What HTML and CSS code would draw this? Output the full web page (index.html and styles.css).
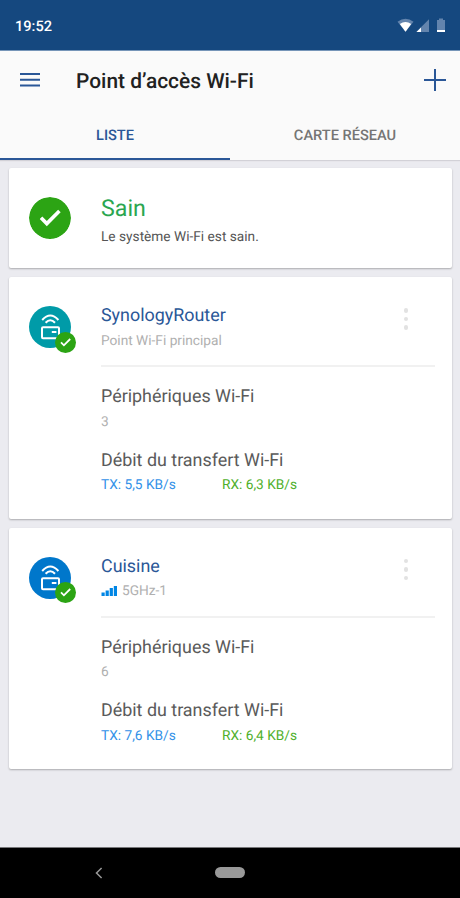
FILE: index.html
```html
<!DOCTYPE html>
<html lang="fr">
<head>
<meta charset="utf-8">
<title>Point d’accès Wi-Fi</title>
<link rel="stylesheet" href="styles.css">
</head>
<body>
<svg width="0" height="0" class="defs">
  <symbol id="router" viewBox="0 0 42 42">
    <g fill="none" stroke="#fff" stroke-width="2">
      <path d="M13.200 14Q21.300 5.200 29.400 14M16.600 16.700Q21.300 11.700 26 16.700"/>
      <rect x="13" y="21.200" width="17" height="11" rx="1"/>
      <path d="M22.800 26h4.600"/>
    </g>
  </symbol>
  <symbol id="check" viewBox="0 0 42 42">
    <circle cx="21" cy="21" r="21" fill="#2ca414"/>
    <path d="M12 20.800l5.800 5.800L30.400 14" fill="none" stroke="#fff" stroke-width="3.6"/>
  </symbol>
</svg>
<div class="status-bar">
  <span>19:52</span>
  <svg width="50" height="16" viewBox="0 0 50 16">
    <path d="M.5 3.8Q8.5-2.3 16.5 3.8L8.5 13.8Z" fill="#6384ad"/>
    <path d="M2.8 6Q8.5 2.2 14.2 6L8.5 13.8Z" fill="#fff"/>
    <path d="M19.5 14V13.8L32 1.2V14Z" fill="#6384ad"/>
    <path d="M19.5 14L24 9.5V14Z" fill="#fff"/>
    <path d="M40 2h2V.5h4V2h2v12h-8Z" fill="#6384ad"/>
    <path d="M40 12h8v2h-8Z" fill="#fff"/>
  </svg>
</div>
<header class="header">
  <div class="toolbar">
    <svg class="menu" width="20" height="14" viewBox="0 0 20 14"><path d="M0 1h20M0 6.700h20M0 12.400h20" stroke="#2a5797" stroke-width="2"/></svg>
    <h1>Point d’accès Wi-Fi</h1>
    <svg width="22" height="22" viewBox="0 0 22 22"><path d="M0 11h22M11 0v22" stroke="#2a5797" stroke-width="2"/></svg>
  </div>
  <nav class="tabs">
    <span class="tab active">LISTE</span>
    <span class="tab">CARTE RÉSEAU</span>
  </nav>
</header>
<main>
  <section class="card summary">
    <svg class="avatar"><use href="#check"/></svg>
    <div class="info">
      <h2>Sain</h2>
      <p>Le système Wi-Fi est sain.</p>
    </div>
  </section>
  <section class="card node">
    <div class="avatar teal"><svg><use href="#router"/></svg><svg class="badge"><use href="#check"/></svg></div>
    <div class="info">
      <div class="head">
        <div>
          <h3>SynologyRouter</h3>
          <p class="sub">Point Wi-Fi principal</p>
        </div>
        <div class="more"><i></i><i></i><i></i></div>
      </div>
      <h4>Périphériques Wi-Fi</h4>
      <p class="sub count">3</p>
      <h4>Débit du transfert Wi-Fi</h4>
      <p class="rates"><span class="tx">TX: 5,5 KB/s</span><span class="rx">RX: 6,3 KB/s</span></p>
    </div>
  </section>
  <section class="card node">
    <div class="avatar blue"><svg><use href="#router"/></svg><svg class="badge"><use href="#check"/></svg></div>
    <div class="info">
      <div class="head">
        <div>
          <h3>Cuisine</h3>
          <p class="sub"><svg class="signal" width="16" height="12" viewBox="0 0 16 12"><path d="M.5 7.500h3.200V11H.5ZM4.600 5.500h3.200V11H4.600ZM8.700 3h3.200v8H8.700ZM12.800 1H16v10h-3.200Z" fill="#0086e5"/></svg>5GHz-1</p>
        </div>
        <div class="more"><i></i><i></i><i></i></div>
      </div>
      <h4>Périphériques Wi-Fi</h4>
      <p class="sub count">6</p>
      <h4>Débit du transfert Wi-Fi</h4>
      <p class="rates"><span class="tx">TX: 7,6 KB/s</span><span class="rx">RX: 6,4 KB/s</span></p>
    </div>
  </section>
</main>
<footer class="system-nav">
  <svg width="8" height="12" viewBox="0 0 8 12"><path d="M6.600 1L1.500 6l5.100 5" fill="none" stroke="#999" stroke-width="1.500"/></svg>
  <span class="home"></span>
  <span></span>
</footer>
</body>
</html>
```
FILE: styles.css
```css
* { box-sizing: border-box; margin: 0; padding: 0; }
body {
  width: 460px;
  height: 898px;
  display: flex;
  flex-direction: column;
  overflow: hidden;
  background: #ebebf0;
  font-family: Roboto, "Liberation Sans", sans-serif;
  font-size: 13.700px;
  text-rendering: geometricPrecision;
}
svg { display: block; flex: none; }
.defs { position: absolute; }
.status-bar {
  height: 51px;
  flex: none;
  display: flex;
  align-items: center;
  justify-content: space-between;
  padding: 1px 13px 0 15px;
  background: #15487f;
  border-bottom: 1px solid #7695b8;
  color: #fff;
  font-size: 14.6px;
  font-weight: 500;
}
.header {
  height: 109px;
  flex: none;
  background: #fafafa;
  box-shadow: 0 1px 1px #d2d1d7;
}
.toolbar {
  height: 58px;
  display: flex;
  align-items: center;
  padding: 0 14.500px 0 19.500px;
}
.toolbar h1 {
  flex: 1;
  margin-left: 36.500px;
  padding-top: 3px;
  font-size: 20.900px;
  font-weight: 500;
  color: #212121;
}
.tabs { display: flex; height: 51px; }
.tab {
  flex: 1;
  text-align: center;
  line-height: 52px;
  font-size: 14.600px;
  font-weight: 500;
  color: #757575;
}
.tab.active { color: #2a5797; border-bottom: 2px solid #2a5797; }
main {
  flex: 1;
  display: flex;
  flex-direction: column;
  gap: 9px;
  padding: 8px 8px 0 8.500px;
}
.card {
  display: flex;
  background: #fff;
  border-radius: 2px;
  box-shadow: 0 1px 2px rgba(0, 0, 0, .28);
  padding-left: 20.500px;
}
.summary { height: 100px; padding-top: 28.500px; }
.node { height: 241.500px; padding-top: 26px; }
.avatar { width: 42px; height: 42px; border-radius: 50%; flex: none; position: relative; }
.avatar svg { width: 42px; height: 42px; }
.node .avatar { margin-top: 3px; }
.teal { background: #009ba8; }
.blue { background: #0077cb; }
.avatar .badge { position: absolute; left: 26px; top: 25.500px; width: 21px; height: 21px; }
.info { flex: 1; margin-left: 30px; margin-right: 17px; }
h2 { margin-top: -1px; font-size: 23.200px; font-weight: 400; line-height: 24px; color: #2ba650; }
.summary p { margin-top: 8.500px; line-height: 18px; color: #555; }
.head {
  display: flex;
  justify-content: space-between;
  height: 64px;
  border-bottom: 2px solid #f1f1f1;
}
h3 { font-size: 17.900px; font-weight: 400; line-height: 26px; color: #2a5797; }
h4 { font-size: 17.900px; font-weight: 400; line-height: 26px; color: #5a5a5a; }
.head + h4 { margin-top: 17px; }
.sub { display: flex; align-items: center; line-height: 18px; color: #b0b0b0; }
.head .sub { margin-top: 2.500px; }
.signal { margin-right: 5px; }
.count { margin: 2.500px 0 17px; }
.more { display: flex; flex-direction: column; gap: 4px; margin: 5px 27px 0 0; }
.more i { width: 4.500px; height: 4.500px; border-radius: 50%; background: #e2e2e2; }
.rates { display: flex; margin-top: 2.800px; line-height: 18px; }
.tx { width: 121px; color: #3391e8; }
.rx { color: #4fb02b; }
.system-nav {
  height: 51px;
  flex: none;
  display: grid;
  grid-template-columns: 1fr 30px 1fr;
  align-items: center;
  background: #000;
  border-top: 1px solid #77777a;
}
.system-nav svg { margin-left: 95px; margin-top: -1px; }
.home { height: 11px; margin-top: -1px; border-radius: 6px; background: #999; }
```
